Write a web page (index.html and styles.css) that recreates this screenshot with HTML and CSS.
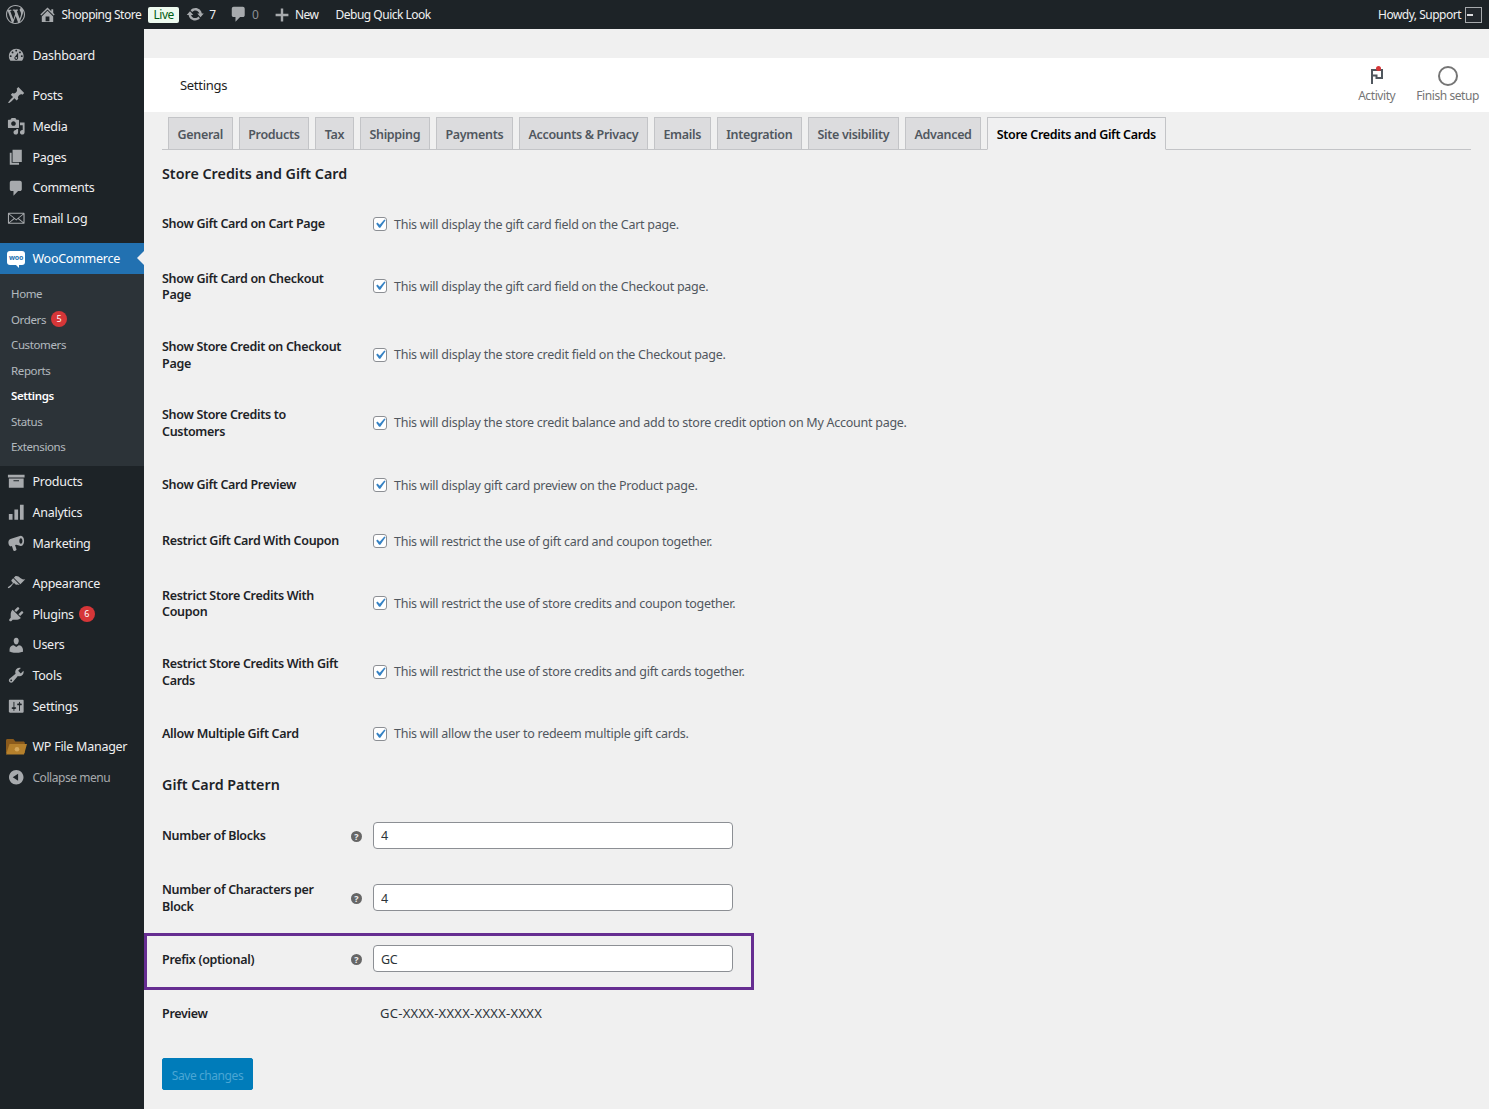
FILE: index.html
```html
<!DOCTYPE html>
<html lang="en">
<head>
  <meta charset="UTF-8">
  <meta name="viewport" content="width=device-width, initial-scale=1.0">
  <title>Settings - Shopping Store</title>
  <link rel="stylesheet" href="styles.css">
</head>
<body>
  <!-- Admin bar -->
  <header class="adminbar">
    <div class="bar-left">
      <svg class="bar-logo" viewBox="0 0 20 20"><path d="M20 10c0-5.51-4.49-10-10-10C4.48 0 0 4.49 0 10c0 5.52 4.48 10 10 10 5.51 0 10-4.48 10-10zM7.78 15.37L4.37 6.22c.55-.02 1.17-.08 1.17-.08.5-.06.44-1.13-.06-1.11 0 0-1.45.11-2.37.11-.18 0-.37 0-.58-.01C4.12 2.69 6.87 1.11 10 1.11c2.33 0 4.45.87 6.05 2.34-.68-.11-1.65.39-1.65 1.58 0 .74.45 1.36.9 2.1.35.61.55 1.36.55 2.46 0 1.49-1.4 5-1.4 5l-3.03-8.37c.54-.02.82-.17.82-.17.5-.05.44-1.25-.06-1.22 0 0-1.44.12-2.38.12-.87 0-2.33-.12-2.33-.12-.5-.03-.56 1.2-.06 1.22l.92.08 1.26 3.41zM17.41 10c.24-.64.74-1.87.43-4.25.7 1.29 1.05 2.71 1.05 4.25 0 3.29-1.73 6.24-4.4 7.78.97-2.59 1.94-5.2 2.92-7.78zM6.1 18.09C3.12 16.65 1.11 13.53 1.11 10c0-1.3.23-2.48.72-3.59C3.25 10.3 4.67 14.2 6.1 18.09zm4.03-6.63l2.58 6.98c-.86.29-1.76.45-2.71.45-.79 0-1.57-.11-2.29-.33.81-2.38 1.62-4.74 2.42-7.1z"/></svg>
      <a class="bar-item bar-site">
        <svg class="bar-icon" viewBox="0 0 20 20"><path d="M16 8.5l1.53 1.53-1.06 1.06L10 4.62l-6.47 6.47-1.06-1.06L10 2.5l4 4v-2h2v4zm-6-2.46l6 5.99V18H4v-5.97zM12 17v-5H8v5h4z"/></svg>
        <span>Shopping Store</span>
      </a>
      <span class="live-badge">Live</span>
      <a class="bar-item bar-updates">
        <svg class="bar-icon" viewBox="0 0 20 20"><path d="M10.2 3.28c3.53 0 6.43 2.61 6.92 6h2.08l-3.5 4-3.5-4h2.32c-.45-1.97-2.21-3.45-4.32-3.45-1.45 0-2.73.71-3.54 1.78L4.95 5.66C6.23 4.2 8.11 3.28 10.2 3.28zm-.4 13.44c-3.52 0-6.43-2.61-6.92-6H.8l3.5-4c1.17 1.33 2.33 2.67 3.5 4H5.48c.45 1.97 2.21 3.45 4.32 3.45 1.45 0 2.73-.71 3.54-1.78l1.71 1.95c-1.28 1.46-3.15 2.38-5.25 2.38z"/></svg>
        <span>7</span>
      </a>
      <a class="bar-item bar-comments">
        <svg class="bar-icon" viewBox="0 0 20 20"><path d="M5 2h10c1.1 0 2 .9 2 2v7c0 1.1-.9 2-2 2h-3l-5 5v-5H5c-1.1 0-2-.9-2-2V4c0-1.1.9-2 2-2z"/></svg>
        <span class="muted">0</span>
      </a>
      <a class="bar-item bar-new">
        <svg class="bar-icon" viewBox="0 0 20 20"><path d="M18 8.5v3h-6.500V18h-3v-6.500H2v-3h6.500V2h3v6.500z"/></svg>
        <span>New</span>
      </a>
      <a class="bar-item bar-debug">Debug Quick Look</a>
    </div>
    <div class="bar-right">
      <span>Howdy, Support</span>
      <span class="avatar"><i></i></span>
    </div>
  </header>

  <div class="layout">
    <!-- Sidebar -->
    <nav class="sidebar">
      <ul class="menu">
        <li class="menu-item">
          <svg viewBox="0 0 20 20"><path d="M3.76 16h12.48c1.1-1.37 1.76-3.11 1.76-5 0-4.42-3.58-8-8-8s-8 3.58-8 8c0 1.89.66 3.63 1.76 5zM10 4c.55 0 1 .45 1 1s-.45 1-1 1-1-.45-1-1 .45-1 1-1zM6 6c.55 0 1 .45 1 1s-.45 1-1 1-1-.45-1-1 .45-1 1-1zm8 0c.55 0 1 .45 1 1s-.45 1-1 1-1-.45-1-1 .45-1 1-1zm-5.37 5.55L12 7v6c0 1.1-.9 2-2 2s-2-.9-2-2c0-.57.24-1.08.63-1.45zM4 10c.55 0 1 .45 1 1s-.45 1-1 1-1-.45-1-1 .45-1 1-1zm12 0c.55 0 1 .45 1 1s-.45 1-1 1-1-.45-1-1 .45-1 1-1zm-5 3c0-.55-.45-1-1-1s-1 .45-1 1 .45 1 1 1 1-.45 1-1z"/></svg>
          Dashboard
        </li>
        <li class="menu-sep"></li>
        <li class="menu-item">
          <svg viewBox="0 0 20 20"><path d="M10.44 3.02l1.82-1.82 6.36 6.35-1.83 1.82c-1.05-.68-2.48-.57-3.41.36l-.75.75c-.92.93-1.04 2.35-.35 3.41l-1.83 1.82-2.41-2.41-2.8 2.79c-.42.42-3.38 2.71-3.8 2.29s1.86-3.39 2.28-3.81l2.79-2.79L4.1 9.36l1.83-1.82c1.05.69 2.48.57 3.4-.36l.75-.75c.93-.92 1.05-2.35.36-3.41z"/></svg>
          Posts
        </li>
        <li class="menu-item">
          <svg viewBox="0 0 20 20"><path d="M13 11V4c0-.55-.45-1-1-1h-1.67L9 1H5L3.67 3H2c-.55 0-1 .45-1 1v7c0 .55.45 1 1 1h10c.55 0 1-.45 1-1zM7 4.5c1.38 0 2.5 1.12 2.5 2.5S8.38 9.5 7 9.5 4.5 8.38 4.5 7 5.62 4.5 7 4.5zM14 6h5v10.5c0 1.38-1.12 2.5-2.5 2.5S14 17.88 14 16.5s1.12-2.5 2.5-2.5c.17 0 .34.02.5.05V9h-3V6zm-4 8.05V13h2v3.5c0 1.38-1.12 2.5-2.5 2.5S7 17.88 7 16.5 8.12 14 9.5 14c.17 0 .34.02.5.05z"/></svg>
          Media
        </li>
        <li class="menu-item">
          <svg viewBox="0 0 20 20"><path d="M6 15V2h10v13H6zm-1 1h8v2H3V5h2v11z"/></svg>
          Pages
        </li>
        <li class="menu-item">
          <svg viewBox="0 0 20 20"><path d="M5 2h9c1.1 0 2 .9 2 2v7c0 1.1-.9 2-2 2h-2l-5 5v-5H5c-1.1 0-2-.9-2-2V4c0-1.1.9-2 2-2z"/></svg>
          Comments
        </li>
        <li class="menu-item">
          <svg viewBox="0 0 20 20"><path fill-rule="evenodd" d="M2 4h16c.55 0 1 .45 1 1v10c0 .55-.45 1-1 1H2c-.55 0-1-.45-1-1V5c0-.55.45-1 1-1zm.6 1.200L10 11l7.400-5.800H2.600zM2.200 6v8.300L7.300 10zm15.600 0l-5.100 4 5.100 4.300zM8.200 10.700l-5.300 4.100h14.200l-5.300-4.100L10 12.300z"/></svg>
          Email Log
        </li>
        <li class="menu-sep"></li>
        <li class="menu-item menu-current">
          <span class="woo-icon">woo</span>
          WooCommerce
        </li>
        <li class="submenu">
          <a>Home</a>
          <a>Orders <span class="count">5</span></a>
          <a>Customers</a>
          <a>Reports</a>
          <a class="sub-current">Settings</a>
          <a>Status</a>
          <a>Extensions</a>
        </li>
        <li class="menu-item">
          <svg viewBox="0 0 20 20"><path d="M19 3v3H1V3h18zM2 7h16v10H2V7zm11 3V9H7v1h6z"/></svg>
          Products
        </li>
        <li class="menu-item">
          <svg viewBox="0 0 20 20"><path d="M18 18V2h-4v16h4zm-6 0V7H8v11h4zm-6 0v-6H2v6h4z"/></svg>
          Analytics
        </li>
        <li class="menu-item">
          <svg viewBox="0 0 20 20"><path fill-rule="evenodd" d="M15 2c2 0 3.500 2.400 3.500 5.500S17 13 15 13c-.4 0-.8-.1-1.100-.3L10 11.500l-1.300.4 1.500 4.600c.2.600-.1 1.200-.7 1.400l-1.300.400c-.6.200-1.200-.1-1.400-.7L5.300 13 4 13.400c-1.300 0-2.500-1.800-2.500-4.200 0-2 .9-3.500 2.200-3.900L13 2.500c.6-.3 1.300-.5 2-.5zm0 2.500c-1 0-1.700 1.300-1.700 3s.7 3 1.700 3 1.700-1.300 1.700-3-.7-3-1.700-3z"/></svg>
          Marketing
        </li>
        <li class="menu-sep"></li>
        <li class="menu-item">
          <svg viewBox="0 0 20 20"><path d="M14.480 11.060L7.410 3.990l1.500-1.500c.5-.56 2.300-.47 3.510.32 1.210.8 1.430 1.280 2.910 2.100 1.180.64 2.450 1.260 4.450.85zm-.71.71L6.700 4.700 4.930 6.470c-.39.390-.39 1.020 0 1.410l1.060 1.060c.39.39.39 1.030 0 1.420-.6.600-1.430 1.110-2.210 1.690-.35.260-.7.530-1.010.84C1.430 13.230.5 14.620 1.050 15.170c.55.550 1.950-.37 3.290-1.710.31-.31.58-.66.84-1.010.58-.78 1.090-1.610 1.690-2.210.39-.39 1.030-.39 1.420 0l1.060 1.060c.39.39 1.020.39 1.410 0z"/></svg>
          Appearance
        </li>
        <li class="menu-item">
          <svg viewBox="0 0 20 20"><path d="M13.110 4.360L9.870 7.600 8 5.730l3.240-3.240c.35-.34 1.050-.2 1.560.32.520.51.660 1.210.310 1.550zm-8 1.770l.91-1.120 9.010 9.010-1.190.84c-.71.71-2.630 1.160-3.820 1.160H6.140L4.900 17.260c-.59.590-1.540.590-2.120 0-.59-.58-.59-1.530 0-2.120l1.240-1.240v-3.880c0-1.130.4-3.190 1.090-3.890zm7.260 3.970l3.240-3.240c.34-.35 1.040-.21 1.550.31.520.51.660 1.210.310 1.550l-3.240 3.250z"/></svg>
          Plugins <span class="count">6</span>
        </li>
        <li class="menu-item">
          <svg viewBox="0 0 20 20"><path d="M10 9.250c-2.270 0-2.730-3.440-2.730-3.440C7 4.020 7.820 2 9.970 2c2.160 0 2.980 2.020 2.710 3.810 0 0-.41 3.440-2.680 3.440zm0 2.570L12.720 10c2.390 0 4.520 2.330 4.520 4.530v2.490s-3.650 1.130-7.240 1.130c-3.650 0-7.240-1.130-7.240-1.130v-2.490c0-2.250 1.940-4.480 4.470-4.480z"/></svg>
          Users
        </li>
        <li class="menu-item">
          <svg viewBox="0 0 20 20"><path d="M16.680 9.770c-1.340 1.340-3.300 1.670-4.950.99l-5.410 6.520c-.99.990-2.590.990-3.580 0s-.99-2.590 0-3.570l6.520-5.420c-.68-1.650-.35-3.610.99-4.950 1.280-1.280 3.120-1.620 4.720-1.060l-2.890 2.890 2.820 2.820 2.860-2.870c.53 1.580.18 3.390-1.080 4.650zM3.810 16.210c.4.390 1.040.39 1.430 0 .4-.4.4-1.040 0-1.430-.39-.4-1.030-.4-1.430 0-.39.39-.39 1.030 0 1.430z"/></svg>
          Tools
        </li>
        <li class="menu-item">
          <svg viewBox="0 0 20 20"><path d="M18 16V4c0-.55-.45-1-1-1H3c-.55 0-1 .45-1 1v12c0 .55.45 1 1 1h14c.55 0 1-.45 1-1zM8 11h1c.55 0 1 .45 1 1s-.45 1-1 1H8v1.500c0 .28-.22.5-.5.5s-.5-.22-.5-.5V13H6c-.55 0-1-.45-1-1s.45-1 1-1h1V5.500c0-.28.22-.5.5-.5s.5.22.5.5V11zm5-2h-1c-.55 0-1-.45-1-1s.45-1 1-1h1V5.500c0-.28.22-.5.5-.5s.5.22.5.5V7h1c.55 0 1 .45 1 1s-.45 1-1 1h-1v5.500c0 .28-.22.5-.5.5s-.5-.22-.5-.5V9z"/></svg>
          Settings
        </li>
        <li class="menu-sep"></li>
        <li class="menu-item menu-fm">
          <svg class="folder" viewBox="0 0 21 16"><path fill="#8a5a1c" d="M0 1.500C0 .7.600 0 1.400 0h6l2 2.500h8c.8 0 1.400.6 1.400 1.400V14H0z"/><path fill="#b5802c" d="M3.500 5H21l-3 10.500H0z"/><circle cx="11" cy="10.200" r="2.300" fill="#d4a65a"/></svg>
          WP File Manager
        </li>
        <li class="menu-item menu-collapse">
          <svg viewBox="0 0 20 20"><path d="M10 2.160c4.330 0 7.840 3.510 7.840 7.840s-3.510 7.840-7.840 7.840S2.160 14.330 2.160 10 5.710 2.160 10 2.160zm2 11.720V6.120L6.180 9.970z"/></svg>
          Collapse menu
        </li>
      </ul>
    </nav>

    <main class="content">
      <!-- Page header -->
      <div class="page-header">
        <h1>Settings</h1>
        <div class="activity">
          <div class="activity-btn">
            <svg class="flag" viewBox="0 0 20 20"><path d="M5 18V4h10v8H9.500V9.500H5" fill="none" stroke="#50575e" stroke-width="2"/><circle cx="11.500" cy="2.500" r="2.500" fill="#d63638"/></svg>
            <span>Activity</span>
          </div>
          <div class="activity-btn">
            <span class="setup-ring"></span>
            <span>Finish setup</span>
          </div>
        </div>
      </div>

      <div class="wrap">
        <!-- Tabs -->
        <div class="tabs">
          <a class="tab">General</a>
          <a class="tab">Products</a>
          <a class="tab">Tax</a>
          <a class="tab">Shipping</a>
          <a class="tab">Payments</a>
          <a class="tab">Accounts &amp; Privacy</a>
          <a class="tab">Emails</a>
          <a class="tab">Integration</a>
          <a class="tab">Site visibility</a>
          <a class="tab">Advanced</a>
          <a class="tab tab-active">Store Credits and Gift Cards</a>
        </div>

        <h2>Store Credits and Gift Card</h2>
        <div class="form-rows">
          <div class="row">
            <label>Show Gift Card on Cart Page</label>
            <div class="check"><input type="checkbox" checked><span>This will display the gift card field on the Cart page.</span></div>
          </div>
          <div class="row row-tall">
            <label>Show Gift Card on Checkout<br>Page</label>
            <div class="check"><input type="checkbox" checked><span>This will display the gift card field on the Checkout page.</span></div>
          </div>
          <div class="row row-tall">
            <label>Show Store Credit on Checkout<br>Page</label>
            <div class="check"><input type="checkbox" checked><span>This will display the store credit field on the Checkout page.</span></div>
          </div>
          <div class="row row-tall">
            <label>Show Store Credits to<br>Customers</label>
            <div class="check"><input type="checkbox" checked><span>This will display the store credit balance and add to store credit option on My Account page.</span></div>
          </div>
          <div class="row">
            <label>Show Gift Card Preview</label>
            <div class="check"><input type="checkbox" checked><span>This will display gift card preview on the Product page.</span></div>
          </div>
          <div class="row">
            <label>Restrict Gift Card With Coupon</label>
            <div class="check"><input type="checkbox" checked><span>This will restrict the use of gift card and coupon together.</span></div>
          </div>
          <div class="row row-tall">
            <label>Restrict Store Credits With<br>Coupon</label>
            <div class="check"><input type="checkbox" checked><span>This will restrict the use of store credits and coupon together.</span></div>
          </div>
          <div class="row row-tall">
            <label>Restrict Store Credits With Gift<br>Cards</label>
            <div class="check"><input type="checkbox" checked><span>This will restrict the use of store credits and gift cards together.</span></div>
          </div>
          <div class="row">
            <label>Allow Multiple Gift Card</label>
            <div class="check"><input type="checkbox" checked><span>This will allow the user to redeem multiple gift cards.</span></div>
          </div>
        </div>

        <h2 class="h2-pattern">Gift Card Pattern</h2>
        <div class="form-rows">
          <div class="row">
            <label class="with-help">Number of Blocks <i class="help">?</i></label>
            <input class="text-input" type="text" value="4">
          </div>
          <div class="row row-tall">
            <label class="with-help"><span>Number of Characters per<br>Block</span> <i class="help">?</i></label>
            <input class="text-input" type="text" value="4">
          </div>
          <div class="row row-marked">
            <label class="with-help">Prefix (optional) <i class="help">?</i></label>
            <input class="text-input" type="text" value="GC">
          </div>
          <div class="row row-preview">
            <label>Preview</label>
            <div class="preview-code">GC-XXXX-XXXX-XXXX-XXXX</div>
          </div>
        </div>

        <button class="save-btn" disabled>Save changes</button>
      </div>
    </main>
  </div>
</body>
</html>
```

FILE: styles.css
```css
/* General Reset */
* {
  margin: 0;
  padding: 0;
  box-sizing: border-box;
}

body {
  background: #f0f0f1;
  color: #1d2327;
  font-family: "Noto Sans", "Open Sans", sans-serif;
  font-size: 12.5px;
  letter-spacing: -0.26px;
  overflow: hidden;
}

/* Admin bar */
.adminbar {
  display: flex;
  justify-content: space-between;
  align-items: center;
  height: 29px;
  background: #1d2327;
  color: #f0f0f1;
  font-size: 12px;
  letter-spacing: -0.5px;
  padding: 0 7px 0 6px;
}

.bar-left,
.bar-right,
.bar-item {
  display: flex;
  align-items: center;
}

.bar-logo {
  width: 19px;
  height: 19px;
  fill: #a7aaad;
}

.bar-icon {
  width: 18.5px;
  height: 18.5px;
  fill: #a7aaad;
}

.bar-item {
  gap: 5px;
}

.bar-site { margin-left: 12.5px; }
.bar-site .bar-icon { width: 19px; height: 19px; }
.bar-updates { margin-left: 6.5px; }
.bar-comments { margin-left: 13px; }
.bar-new { margin-left: 15.5px; }
.bar-new .bar-icon { width: 16px; height: 16px; }
.bar-debug { margin-left: 17px; }

.muted {
  color: #8c8f94;
}

.live-badge {
  margin-left: 7px;
  width: 31px;
  height: 16px;
  line-height: 15px;
  text-align: center;
  background: #edfaef;
  color: #005c12;
  border-radius: 2px;
}

.bar-right {
  gap: 4px;
}

.avatar {
  display: flex;
  align-items: center;
  width: 17px;
  height: 16px;
  border: 1px solid #a7aaad;
  background: #23282d;
  padding-left: 1px;
}

.avatar i {
  display: block;
  width: 6px;
  height: 2px;
  background: #dcdcde;
}

.layout {
  display: flex;
  min-height: 1080px;
}

/* Sidebar */
.sidebar {
  width: 144px;
  flex-shrink: 0;
  background: #1d2327;
  padding-top: 10.9px;
}

.menu {
  list-style: none;
}

.menu-item {
  display: flex;
  align-items: center;
  height: 30.75px;
  padding-left: 7px;
  color: #f0f0f1;
  white-space: nowrap;
}

.menu-item svg {
  width: 18.5px;
  height: 18.5px;
  fill: #a7aaad;
  margin-right: 7px;
  flex-shrink: 0;
}

.menu-sep {
  height: 9.5px;
}

.menu-current {
  position: relative;
  background: #2271b1;
  color: #fff;
}

.menu-current::after {
  content: "";
  position: absolute;
  right: 0;
  top: 8px;
  border: 7.5px solid transparent;
  border-right-color: #f0f0f1;
  border-left-width: 0;
}

.woo-icon {
  position: relative;
  width: 18px;
  height: 14px;
  margin: -2px 7.5px 0 0;
  background: #fff;
  color: #2271b1;
  border-radius: 3px;
  font-size: 7px;
  font-weight: 700;
  line-height: 13px;
  letter-spacing: -0.2px;
  text-align: center;
}

.woo-icon::after {
  content: "";
  position: absolute;
  left: 9px;
  top: 14px;
  border-top: 3px solid #fff;
  border-left: 3px solid transparent;
}

.submenu {
  display: flex;
  flex-direction: column;
  background: #2c3338;
  padding: 6.75px 0;
}

.submenu a {
  display: flex;
  align-items: center;
  height: 25.5px;
  padding-left: 11px;
  font-size: 11.5px;
  letter-spacing: -0.38px;
  color: rgba(240, 246, 252, 0.7);
}

.submenu .sub-current {
  color: #fff;
  font-weight: 600;
}

.count {
  display: inline-block;
  width: 16px;
  height: 16px;
  margin-left: 5px;
  border-radius: 50%;
  background: #d63638;
  color: #fff;
  font-size: 9px;
  line-height: 16px;
  letter-spacing: 0;
  text-align: center;
}

.menu-fm {
  padding-left: 6px;
}

.menu-fm svg {
  width: 21px;
  height: 16px;
  margin-right: 5.5px;
}

.menu-collapse {
  color: #a7aaad;
  font-size: 12px;
  letter-spacing: -0.46px;
}

/* Main content */
.content {
  flex: 1;
  min-width: 0;
  padding-top: 29px;
  background: #f0f0f0;
}

.page-header {
  display: flex;
  justify-content: space-between;
  align-items: center;
  height: 54px;
  background: #fff;
  padding: 0 10px 0 36px;
}

.page-header h1 {
  font-size: 13px;
  font-weight: 400;
  letter-spacing: -0.3px;
  color: #1e1e1e;
}

.activity {
  display: flex;
  gap: 21px;
}

.activity-btn {
  display: flex;
  flex-direction: column;
  align-items: center;
  gap: 1px;
  font-size: 12px;
  letter-spacing: -0.42px;
  color: #757575;
}

.flag {
  width: 20px;
  height: 20px;
}

.setup-ring {
  width: 20px;
  height: 20px;
  border: 2px solid #757575;
  border-radius: 50%;
}

.wrap {
  padding: 5px 18px 0;
}

/* Tabs */
.tabs {
  display: flex;
  gap: 6px;
  padding-left: 6px;
  border-bottom: 1px solid #c3c4c7;
  height: 33px;
}

.tab {
  height: 33px;
  line-height: 33px;
  padding: 0 8.6px;
  background: #dcdcde;
  border: 1px solid #c3c4c7;
  color: #50575e;
  font-weight: 600;
  letter-spacing: -0.32px;
  white-space: nowrap;
  text-align: center;
}

.tab-active {
  background: #f0f0f1;
  border-bottom-color: #f0f0f1;
  color: #000;
}

h2 {
  margin: 14px 0 12px;
  font-size: 14.3px;
  font-weight: 600;
  line-height: 20px;
  letter-spacing: 0;
}

.h2-pattern {
  margin: 13.5px 0 12px;
}

/* Form rows */
.row {
  display: grid;
  grid-template-columns: 211px 1fr;
  align-items: center;
  height: 56px;
}

.row-tall {
  height: 68.4px;
}

.row-tall label,
.row .with-help,
.row-preview label {
  padding-top: 2px;
}

.row label {
  font-weight: 600;
  letter-spacing: -0.31px;
  line-height: 16.5px;
}

.with-help {
  display: flex;
  justify-content: space-between;
  align-items: center;
  padding-right: 11px;
}

.help {
  width: 11px;
  height: 11px;
  border-radius: 50%;
  background: #666;
  color: #f0f0f0;
  font-size: 9px;
  font-style: normal;
  font-weight: 700;
  line-height: 11px;
  text-align: center;
  letter-spacing: 0;
}

.check {
  display: flex;
  align-items: center;
  gap: 7px;
  color: #50575e;
}

.check input {
  appearance: none;
  flex-shrink: 0;
  width: 14px;
  height: 14px;
  border: 1px solid #8c8f94;
  border-radius: 3px;
  background: #fff url("data:image/svg+xml,%3Csvg xmlns='http://www.w3.org/2000/svg' viewBox='0 0 20 20'%3E%3Cpath fill='%233582c4' d='M14.830 4.890l1.340.940-5.810 8.380H9.020L5.780 9.670l1.340-1.250 2.570 2.400z'/%3E%3C/svg%3E") center / 18px no-repeat;
}

.text-input {
  width: 360px;
  height: 27px;
  padding: 1px 7px 0;
  border: 1px solid #8c8f94;
  border-radius: 4px;
  background: #fff;
  color: #2c3338;
  font: inherit;
  letter-spacing: inherit;
}

.row-marked {
  width: 610px;
  height: 57px;
  margin: 1.5px 0 0 -18px;
  padding: 9px 0 15px 15px;
  border: 3px solid #662d91;
}

.row-preview {
  height: 46px;
}

.preview-code {
  padding-left: 7px;
  font-size: 13px;
  letter-spacing: 0.26px;
  color: #2c3338;
}

.save-btn {
  display: block;
  margin-top: 22px;
  padding-top: 2px;
  width: 91px;
  height: 32px;
  border: 1px solid #007cba;
  border-radius: 2px;
  background: #007cba;
  color: #4aa6d4;
  font: inherit;
  font-size: 12px;
  letter-spacing: -0.42px;
}
```
